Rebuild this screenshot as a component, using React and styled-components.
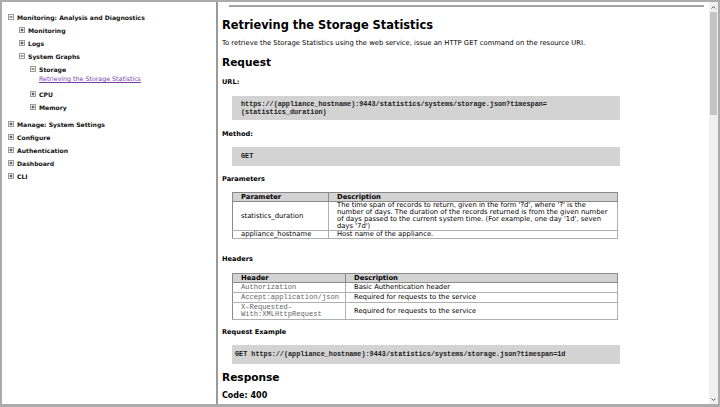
import React from "react";
import styled, { createGlobalStyle } from "styled-components";

const GlobalStyle = createGlobalStyle`
  html, body { margin: 0; padding: 0; overflow: hidden; background: #fff; }
  body { font-family: "DejaVu Sans", Verdana, sans-serif; color: #000; }
  * { box-sizing: border-box; }
`;

const Frameset = styled.div`
  display: flex;
  width: 720px;
  height: 407px;
  border: 2px solid #ababab;
  border-bottom-width: 3px;
  background: #fff;
`;

const NavFrame = styled.nav`
  width: 216px;
  flex: none;
  border-right: 2px solid #9a9a9a;
  padding: 9px 0 0 6px;
  overflow: hidden;
`;

const Tree = styled.ul`
  list-style: none;
  margin: 0;
  padding: 0 0 0 ${(p) => (p.$nested ? 11 : 0)}px;
`;

const Item = styled.li`
  margin-bottom: ${(p) => p.$after || 0}px;
`;

const Row = styled.div`
  display: flex;
  align-items: flex-start;
  height: 13px;
  line-height: 13px;
  font-size: 6.1px;
  font-weight: bold;
  white-space: nowrap;
  color: #111;
`;

const Toggle = styled.svg`
  flex: none;
  width: 6px;
  height: 6px;
  margin-top: 3px;
  margin-right: 3px;
`;

const Leaf = styled.a`
  display: block;
  margin: -2px 0 0 9px;
  line-height: 9px;
  height: 9px;
  font-size: 6.3px;
  color: #7440a8;
  text-decoration: underline;
  white-space: nowrap;
`;

const ContentFrame = styled.div`
  flex: 1;
  display: flex;
  min-width: 0;
`;

const Content = styled.main`
  flex: 1;
  overflow: hidden;
  padding: 0 0 0 4px;
`;

const Rule = styled.hr`
  margin: 3px 5px 0 7px;
  height: 0;
  border: 0;
  border-top: 2px solid #a4a4a4;
`;

const H1 = styled.h1`
  margin: 11px 0 0;
  font-size: 11.4px;
  line-height: 14px;
  font-weight: bold;
`;

const H2 = styled.h2`
  margin: ${(p) => p.$mt}px 0 0;
  font-size: 10.6px;
  line-height: 14px;
  font-weight: bold;
`;

const Para = styled.p`
  margin: 6px 0 0;
  font-size: 6.8px;
  line-height: 10px;
`;

const Label = styled.div`
  margin-top: ${(p) => p.$mt}px;
  font-size: ${(p) => p.$size || 6.6}px;
  line-height: 10px;
  font-weight: bold;
`;

const Pre = styled.pre`
  margin: ${(p) => p.$mt}px 0 0 10px;
  width: 388px;
  background: #d3d3d3;
  padding: ${(p) => p.$pad};
  font-family: "Liberation Mono", "Courier New", monospace;
  font-size: 6.8px;
  line-height: ${(p) => p.$lh}px;
  font-weight: bold;
  white-space: pre;
  color: #1a1a1a;
`;

const Table = styled.table`
  margin: ${(p) => p.$mt}px 0 0 10px;
  width: 386px;
  border-collapse: collapse;
  border: 1px solid #8a8a8a;
  font-size: 6.8px;
`;

const Th = styled.th`
  background: #d3d3d3;
  text-align: left;
  font-weight: bold;
  padding: 0 8px;
  line-height: 8px;
  height: 9px;
  border: 1px solid #8a8a8a;
  width: ${(p) => p.$w || "auto"};
`;

const Td = styled.td`
  padding: ${(p) => (p.$tight ? "0 6px 0 8px" : "1px 6px 1px 8px")};
  line-height: 7px;
  border: 1px solid #b0b0b0;
  border-left-color: #8a8a8a;
  vertical-align: middle;
`;

const Code = styled.div`
  font-family: "Liberation Mono", "Courier New", monospace;
  font-size: 7.1px;
  line-height: 7px;
  color: #666;
`;

const Scrollbar = styled.div`
  width: 9px;
  flex: none;
  display: flex;
  flex-direction: column;
  background: #f0f0f0;
`;

const Arrow = styled.div`
  height: 10px;
  display: flex;
  align-items: center;
  justify-content: center;
`;

const Thumb = styled.div`
  height: 103px;
  margin: 0 1px;
  background: #c4c4c4;
`;

const Track = styled.div`
  flex: 1;
`;

function ToggleIcon({ open }) {
  return (
    <Toggle viewBox="0 0 6 6">
      <rect x="0.5" y="0.5" width="5" height="5" fill="#fff" stroke="#9a9a9a" strokeWidth="1" />
      <line x1="1.5" y1="3" x2="4.5" y2="3" stroke="#333" strokeWidth="1" />
      {!open && <line x1="3" y1="1.5" x2="3" y2="4.5" stroke="#333" strokeWidth="1" />}
    </Toggle>
  );
}

function Node({ label, open, children, after }) {
  return (
    <Item $after={after}>
      <Row>
        <ToggleIcon open={open} />
        {label}
      </Row>
      {children}
    </Item>
  );
}

export default function App() {
  return (
    <>
      <GlobalStyle />
      <Frameset>
        <NavFrame>
          <Tree>
            <Node label="Monitoring: Analysis and Diagnostics" open after={4}>
              <Tree $nested>
                <Node label="Monitoring" />
                <Node label="Logs" />
                <Node label="System Graphs" open>
                  <Tree $nested>
                    <Node label="Storage" open after={5}>
                      <Leaf href="#">Retrieving the Storage Statistics</Leaf>
                    </Node>
                    <Node label="CPU" />
                    <Node label="Memory" />
                  </Tree>
                </Node>
              </Tree>
            </Node>
            <Node label="Manage: System Settings" />
            <Node label="Configure" />
            <Node label="Authentication" />
            <Node label="Dashboard" />
            <Node label="CLI" />
          </Tree>
        </NavFrame>
        <ContentFrame>
          <Content>
            <Rule />
            <H1>Retrieving the Storage Statistics</H1>
            <Para>
              To retrieve the Storage Statistics using the web service, issue an HTTP GET command on the resource URI.
            </Para>
            <H2 $mt={7}>Request</H2>
            <Label $mt={8}>URL:</Label>
            <Pre $mt={9} $pad="4px 9px" $lh={8}>
              {"https://(appliance_hostname):9443/statistics/systems/storage.json?timespan=\n(statistics_duration)"}
            </Pre>
            <Label $mt={9}>Method:</Label>
            <Pre $mt={8} $pad="5px 9px" $lh={9}>GET</Pre>
            <Label $mt={8}>Parameters</Label>
            <Table $mt={8}>
              <thead>
                <tr>
                  <Th $w="96px">Parameter</Th>
                  <Th>Description</Th>
                </tr>
              </thead>
              <tbody>
                <tr>
                  <Td $tight>statistics_duration</Td>
                  <Td $tight>
                    The time span of records to return, given in the form '?d', where '?' is the number of days. The
                    duration of the records returned is from the given number of days passed to the current system
                    time. (For example, one day '1d', seven days '7d')
                  </Td>
                </tr>
                <tr>
                  <Td $tight>appliance_hostname</Td>
                  <Td $tight>Host name of the appliance.</Td>
                </tr>
              </tbody>
            </Table>
            <Label $mt={15}>Headers</Label>
            <Table $mt={9}>
              <thead>
                <tr>
                  <Th $w="113px">Header</Th>
                  <Th>Description</Th>
                </tr>
              </thead>
              <tbody>
                <tr>
                  <Td><Code>Authorization</Code></Td>
                  <Td>Basic Authentication header</Td>
                </tr>
                <tr>
                  <Td><Code>Accept:application/json</Code></Td>
                  <Td>Required for requests to the service</Td>
                </tr>
                <tr>
                  <Td><Code>X-Requested-<br />With:XMLHttpRequest</Code></Td>
                  <Td>Required for requests to the service</Td>
                </tr>
              </tbody>
            </Table>
            <Label $mt={7}>Request Example</Label>
            <Pre $mt={8} $pad="5px 3px" $lh={9}>
              GET https://(appliance_hostname):9443/statistics/systems/storage.json?timespan=1d
            </Pre>
            <H2 $mt={6}>Response</H2>
            <Label $mt={7} $size={8}>Code: 400</Label>
          </Content>
          <Scrollbar>
            <Arrow>
              <svg width="5" height="3" viewBox="0 0 5 3">
                <path d="M0.5 2.5 L2.5 0.5 L4.5 2.5" fill="none" stroke="#606060" strokeWidth="1" />
              </svg>
            </Arrow>
            <Thumb />
            <Track />
            <Arrow>
              <svg width="5" height="3" viewBox="0 0 5 3">
                <path d="M0.5 0.5 L2.5 2.5 L4.5 0.5" fill="none" stroke="#606060" strokeWidth="1" />
              </svg>
            </Arrow>
          </Scrollbar>
        </ContentFrame>
      </Frameset>
    </>
  );
}
